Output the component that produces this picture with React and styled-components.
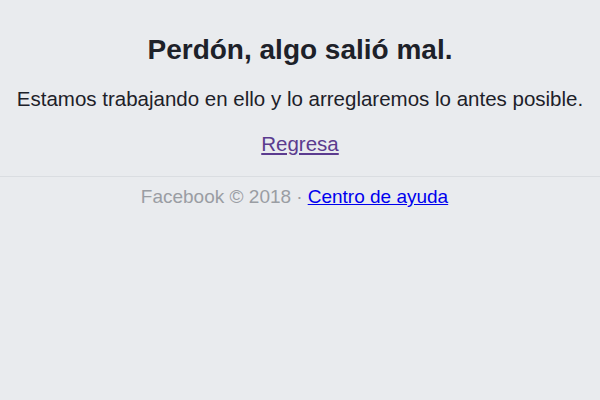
import React from "react";
import styled, { createGlobalStyle } from "styled-components";

const Global = createGlobalStyle`
  html, body { margin: 0; padding: 0; background: #e9ebee; }
  body { font-family: "Liberation Sans", Arial, sans-serif; }
`;

const Page = styled.div`
  width: 600px;
  height: 400px;
  background: #e9ebee;
  display: flex;
  flex-direction: column;
`;

const Main = styled.div`
  display: flex;
  flex-direction: column;
  align-items: center;
  padding-top: 34px;
  padding-bottom: 20px;
  border-bottom: 1px solid #dadde1;
`;

const Title = styled.h2`
  margin: 0;
  font-size: 28px;
  font-weight: bold;
  color: #1d2129;
  line-height: 32px;
`;

const Message = styled.p`
  margin: 21px 0 0;
  font-size: 20.5px;
  color: #1d2129;
  line-height: 24px;
  white-space: nowrap;
`;

const BackLink = styled.a`
  margin-top: 21px;
  font-size: 20.5px;
  line-height: 24px;
  color: ${(p) => (p.$visited ? "#5b3b8f" : "#0000ee")};
  text-decoration: underline;
`;

const Footer = styled.div`
  display: flex;
  justify-content: center;
  gap: 5px;
  padding-top: 8px;
  padding-right: 11px;
  font-size: 19px;
  line-height: 24px;
  color: #9a9da3;
`;

const HelpLink = styled.a`
  color: #0000ee;
  text-decoration: underline;
`;

export default function App() {
  return (
    <Page>
      <Global />
      <Main>
        <Title>Perdón, algo salió mal.</Title>
        <Message>Estamos trabajando en ello y lo arreglaremos lo antes posible.</Message>
        <BackLink $visited href="#">Regresa</BackLink>
      </Main>
      <Footer>
        <span>Facebook © 2018 ·</span>
        <HelpLink href="#">Centro de ayuda</HelpLink>
      </Footer>
    </Page>
  );
}
